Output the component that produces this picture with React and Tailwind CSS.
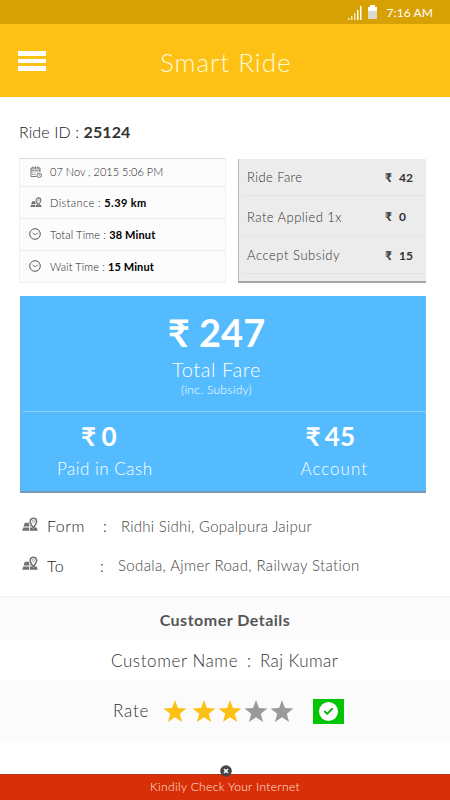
import { Check } from "lucide-react";

const CalendarIcon = () => (
  <svg className="w-3 h-3" viewBox="0 0 12 12" fill="none" stroke="#666" strokeWidth="0.9">
    <path d="M10 6V2H1v8.5h5.5M1 4.2h9M3 .5v2M5.5.5v2M8 .5v2" />
    <path d="M2.4 6h1M4.6 6h1M6.8 6h1M2.4 8.3h1M4.6 8.3h1" strokeWidth="1.2" />
    <circle cx="9.3" cy="9.3" r="2.2" />
    <path d="M9.3 8v1.4h1" strokeWidth="0.6" />
  </svg>
);

const MapPinIcon = ({ className }) => (
  <svg className={className} viewBox="0 0 16 15">
    <path fill="#707070" d="M2.8 5.8h4.4v3.6H1.6zM7.9 7.6l1.4 1.8H7.9zM1.3 10.4h5.9v3.4H.2zM8 10.4h2.2l1.2 1.8 1.2-1.8h2.1l1 3.4H8z" />
    <path fill="none" stroke="#707070" strokeWidth="1.5" d="M11.4 10.8C9.6 8.2 8.2 6.2 8.2 4.4a3.2 3.2 0 0 1 6.4 0c0 1.8-1.4 3.8-3.2 6.4z" />
    <circle cx="11.4" cy="4.4" r="1.1" fill="none" stroke="#707070" strokeWidth="0.6" />
  </svg>
);

const ClockIcon = () => (
  <svg className="w-3 h-3" viewBox="0 0 12 12" fill="none" stroke="#555">
    <circle cx="6" cy="6" r="5.3" strokeWidth="1" />
    <path d="M3.4 4.9 6 6.6 8.8 5.2" strokeWidth="0.8" />
  </svg>
);

const Star = ({ className }) => (
  <svg className={className} viewBox="0 0 24 23" fill="currentColor">
    <path d="M12 0l3.1 8.4 8.9.4-7 5.5 2.4 8.6L12 18l-7.4 4.9L7 14.3 0 8.8l8.9-.4z" />
  </svg>
);

const App = () => {
  return (
    <div className="w-[450px] h-[800px] flex flex-col bg-white overflow-hidden font-['Lato','Noto_Sans',sans-serif] font-light leading-none whitespace-nowrap">
      {/* Status bar */}
      <div className="h-6 shrink-0 bg-[#d7a003] flex items-center justify-end pr-[17px] text-white">
        <svg className="w-[14px] h-[14px] mr-[6px] mt-[2px]" viewBox="0 0 14 14" fill="#fff">
          <path d="M0 12h1.5v2H0zM3 10h1.5v4H3zM6 7h1.5v7H6z" opacity="0.75" />
          <path d="M9 4h1.5v10H9zM12 0h1.5v14H12z" />
        </svg>
        <svg className="w-[9px] h-[14px] mr-[9px]" viewBox="0 0 9 14">
          <path d="M2 0h5v2h2v4H0V2h2z" fill="#fff" />
          <path d="M0 6h9v8H0z" fill="#ddd9d0" />
        </svg>
        <span className="text-[12px] font-normal tracking-[0.1px] pt-px">7:16 AM</span>
      </div>

      {/* Header */}
      <div className="h-[73px] shrink-0 bg-[#fdc116] flex items-center pl-[18px]">
        <div className="w-[142px] flex flex-col gap-[3px]">
          <div className="w-7 h-[5px] bg-white" />
          <div className="w-7 h-[4px] bg-white" />
          <div className="w-7 h-[5px] bg-white" />
        </div>
        <h1 className="text-[26px] text-[#fffbd8] tracking-[1px] pt-[3px]">Smart Ride</h1>
      </div>

      {/* Ride id */}
      <div className="h-[61px] shrink-0 pl-[19px] pt-[27px] text-[16px] tracking-[0.1px] text-[#222]">
        Ride ID : <b className="font-bold text-[#333]">25124</b>
      </div>

      {/* Trip info and fare breakdown */}
      <div className="h-[138px] shrink-0 flex pl-[19px] gap-3">
        <div className="w-[207px] h-[125px] bg-[#fcfcfc] border border-[#f0f0f0] border-t-[#ddd] text-[11px] text-[#222] divide-y divide-[#ececec]">
          <div className="h-[28px] flex items-center pl-[10px] pb-[2px]">
            <CalendarIcon />
            <span className="ml-[8px]">07 Nov , 2015 5:06 PM</span>
          </div>
          <div className="h-[32px] flex items-center pl-[10px] pb-px">
            <MapPinIcon className="w-3 h-[11px]" />
            <span className="ml-[8px] tracking-[0.4px]">Distance : <b className="font-bold text-black">5.39 km</b></span>
          </div>
          <div className="h-[32px] flex items-center pl-[9px] pb-px">
            <ClockIcon />
            <span className="ml-[9px] tracking-[0.15px]">Total Time : <b className="font-bold text-black">38 Minut</b></span>
          </div>
          <div className="h-[32px] flex items-center pl-[9px] pb-[2px]">
            <ClockIcon />
            <span className="ml-[9px] tracking-[0.1px]">Wait Time : <b className="font-bold text-black">15 Minut</b></span>
          </div>
        </div>

        <div className="w-[188px] h-[124px] mt-px bg-[#ececec] border-l border-b-2 border-l-[#b5b5b5] border-b-[#a5a5a5] text-[13px] text-[#333]">
          <div className="h-[37px] mx-[2px] pl-[6px] pt-px flex items-center border-b border-[#e3e3e3]">
            <span className="w-[138px] tracking-[0.4px]">Ride Fare</span>
            <span className="w-[14px] text-[12px] font-bold">₹</span>
            <span className="text-[12px] font-bold">42</span>
          </div>
          <div className="h-[40px] mx-[2px] pl-[6px] pt-[3px] flex items-center border-b border-[#e6e6e6]">
            <span className="w-[138px] tracking-[0.45px]">Rate Applied 1x</span>
            <span className="w-[14px] text-[12px] font-bold">₹</span>
            <span className="text-[12px] font-bold">0</span>
          </div>
          <div className="h-[38px] mx-[2px] pl-[6px] pt-[2px] flex items-center border-b border-[#e3e3e3]">
            <span className="w-[138px] tracking-[0.55px]">Accept Subsidy</span>
            <span className="w-[14px] text-[12px] font-bold">₹</span>
            <span className="text-[12px] font-bold">15</span>
          </div>
        </div>
      </div>

      {/* Total fare */}
      <div className="w-[406px] h-[197px] shrink-0 ml-5 bg-[#55bbff] border-b-2 border-l border-b-[#7799b3] border-l-[#6fb0dc] text-white">
        <div className="h-[115px] pt-[17px] pr-[14px] flex flex-col items-center">
          <div className="h-[38px] flex items-center text-[38px] font-bold">₹ 247</div>
          <div className="mt-[8px] text-[20px] tracking-[0.6px]">Total Fare</div>
          <div className="mt-[5px] text-[12px] tracking-[0.3px]">(inc. Subsidy)</div>
        </div>
        <div className="h-px ml-[2px] bg-[#8fd0fb]" />
        <div className="flex justify-between pl-[36px] pr-[58px] pt-[10px]">
          <div className="flex flex-col items-center">
            <div className="h-7 mr-[12px] flex items-center text-[26px] font-bold [word-spacing:-1px]">₹ 0</div>
            <div className="mt-[10px] text-[17px] tracking-[0.5px]">Paid in Cash</div>
          </div>
          <div className="flex flex-col items-center">
            <div className="h-7 mr-[8px] flex items-center text-[26px] font-bold [word-spacing:-2px]">₹ 45</div>
            <div className="mt-[10px] text-[17px] tracking-[1px]">Account</div>
          </div>
        </div>
      </div>

      {/* Route */}
      <div className="h-[103px] shrink-0 pl-[22px] pt-[13px] text-[#222]">
        <div className="h-10 flex items-center">
          <MapPinIcon className="w-4 h-[15px] mb-1" />
          <span className="w-[56px] ml-[9px] text-[16px] tracking-[0.5px]">Form</span>
          <span className="w-[18px] text-[16px]">:</span>
          <span className="text-[15px] tracking-[0.25px] text-[#444]">Ridhi Sidhi, Gopalpura Jaipur</span>
        </div>
        <div className="h-[39px] flex items-center">
          <MapPinIcon className="w-4 h-[15px] mb-1" />
          <span className="w-[53px] ml-[9px] text-[16px] tracking-[0.5px]">To</span>
          <span className="w-[18px] text-[16px]">:</span>
          <span className="text-[15px] tracking-[0.36px] text-[#444]">Sodala, Ajmer Road, Railway Station</span>
        </div>
      </div>

      {/* Customer */}
      <div className="h-[44px] shrink-0 bg-[#fbfbfb] border-t border-[#f3f3f3] pt-[15px] text-center text-[16px] tracking-[0.5px] font-bold text-[#555]">
        Customer Details
      </div>
      <div className="h-[40px] shrink-0 flex items-center pl-[111px] text-[17px] text-[#333]">
        <span className="w-[136px] tracking-[0.6px]">Customer Name</span>
        <span className="w-[13px]">:</span>
        <span className="tracking-[0.4px]">Raj Kumar</span>
      </div>
      <div className="h-[63px] shrink-0 flex items-center bg-[#fbfbfb] pl-[113px] pb-[2px] text-[17px] text-[#333]">
        <span className="w-[50px] tracking-[0.8px]">Rate</span>
        <Star className="w-6 h-[22px] text-[#fdc116]" />
        <Star className="w-6 h-[22px] ml-[5px] text-[#fdc116]" />
        <Star className="w-6 h-[22px] ml-[2px] text-[#fdc116]" />
        <Star className="w-6 h-[22px] ml-[2px] text-[#9a9a9a]" />
        <Star className="w-6 h-[22px] ml-[2px] text-[#9a9a9a]" />
        <div className="w-[31px] h-[25px] ml-[19px] mt-[2px] bg-[#04c504] flex items-center justify-center">
          <div className="w-[19px] h-[19px] rounded-full bg-white flex items-center justify-center">
            <Check className="w-[11px] h-[11px] text-[#04b504]" strokeWidth={4} />
          </div>
        </div>
      </div>

      {/* Connection warning */}
      <div className="relative mt-auto h-[26px] shrink-0 bg-[#d92f08] border-t border-[#b3341a] flex items-center justify-center pb-px text-[12px] text-[#ffe6dc] tracking-[0.35px]">
        Kindily Check Your Internet
        <svg className="absolute left-[220px] -top-[10px] w-3 h-3" viewBox="0 0 12 12">
          <circle cx="6" cy="6" r="5.8" fill="#444" />
          <path d="M4 4l4 4M8 4l-4 4" stroke="#fff" strokeWidth="1.6" />
        </svg>
      </div>
    </div>
  );
};

export default App;
